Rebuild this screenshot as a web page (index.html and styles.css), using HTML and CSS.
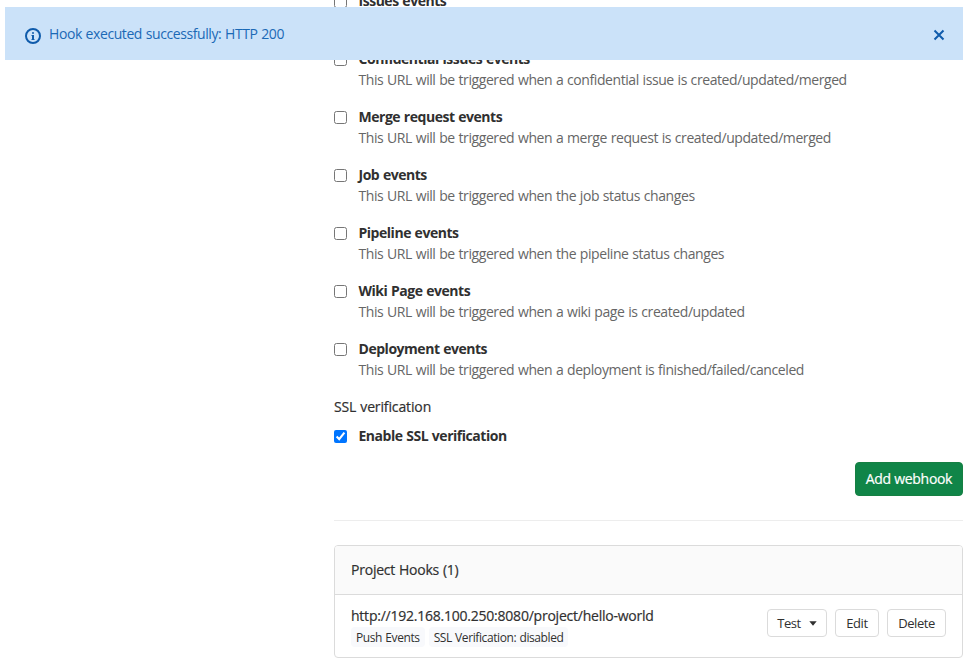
FILE: index.html
```html
<!DOCTYPE html>
<html lang="en">
<head>
<meta charset="utf-8">
<title>Webhooks</title>
<link rel="stylesheet" href="styles.css">
</head>
<body>
<div class="flash" role="status">
  <svg class="flash-icon" width="16" height="16" viewBox="0 0 16 16" aria-hidden="true"><circle cx="8" cy="8" r="7" fill="none" stroke="currentColor" stroke-width="2"/><rect x="7" y="4" width="2" height="2" rx="1" fill="currentColor"/><path d="M6.5 7H9v4h.5v1h-3v-1H7V8h-.5z" fill="currentColor"/></svg>
  <span class="flash-text">Hook executed successfully: HTTP 200</span>
  <svg class="flash-close" width="12" height="12" viewBox="0 0 12 12" aria-label="Close"><path d="M1.5 1.5l9 9M10.5 1.5l-9 9" fill="none" stroke="currentColor" stroke-width="2"/></svg>
</div>
<main class="content">
  <form class="hook-form">
    <label class="event"><input type="checkbox"><span><strong>Issues events</strong><span class="help">This URL will be triggered when an issue is created/updated/merged</span></span></label>
    <label class="event"><input type="checkbox"><span><strong>Confidential issues events</strong><span class="help">This URL will be triggered when a confidential issue is created/updated/merged</span></span></label>
    <label class="event"><input type="checkbox"><span><strong>Merge request events</strong><span class="help">This URL will be triggered when a merge request is created/updated/merged</span></span></label>
    <label class="event"><input type="checkbox"><span><strong>Job events</strong><span class="help">This URL will be triggered when the job status changes</span></span></label>
    <label class="event"><input type="checkbox"><span><strong>Pipeline events</strong><span class="help">This URL will be triggered when the pipeline status changes</span></span></label>
    <label class="event"><input type="checkbox"><span><strong>Wiki Page events</strong><span class="help">This URL will be triggered when a wiki page is created/updated</span></span></label>
    <label class="event"><input type="checkbox"><span><strong>Deployment events</strong><span class="help">This URL will be triggered when a deployment is finished/failed/canceled</span></span></label>
    <div class="section-label">SSL verification</div>
    <label class="event ssl"><input type="checkbox" checked><span><strong>Enable SSL verification</strong></span></label>
    <div class="actions"><button type="button" class="btn-success">Add webhook</button></div>
  </form>
  <hr>
  <section class="card">
    <header class="card-header">Project Hooks (1)</header>
    <div class="hook">
      <div class="hook-info">
        <div class="hook-url">http://192.168.100.250:8080/project/hello-world</div>
        <div class="tags"><span class="tag">Push Events</span><span class="tag">SSL Verification: disabled</span></div>
      </div>
      <div class="hook-actions">
        <button type="button" class="btn test">Test <svg class="caret" width="8" height="5" viewBox="0 0 8 5"><path d="M.3.3h7.4L4 4.7z" fill="currentColor"/></svg></button>
        <button type="button" class="btn edit">Edit</button>
        <button type="button" class="btn delete">Delete</button>
      </div>
    </div>
  </section>
</main>
</body>
</html>
```
FILE: styles.css
```css
* { box-sizing: border-box; }
body {
  margin: 0;
  height: 661px;
  overflow: hidden;
  background: #fff;
  color: #303030;
  font: 14px/21px "Open Sans", "Noto Sans", sans-serif;
  letter-spacing: -0.415px;
  word-spacing: 0.5px;
}
.flash {
  position: absolute;
  z-index: 1;
  top: 7px;
  left: 5px;
  width: 958px;
  height: 53px;
  padding: 0 18px 0 20px;
  display: flex;
  align-items: center;
  background: #cbe2f9;
  color: #1b69b6;
}
.flash-icon { margin: 5px 8px 0 0; color: #0f5bab; }
.flash-text { flex: 1; }
.flash-close { margin-top: 3px; color: #0f5bab; }
.content {
  width: 629px;
  margin-left: 334px;
  display: flow-root;
}
.hook-form { margin-top: -10px; }
.event {
  display: flex;
  height: 58px;
}
.event input {
  width: 13px;
  height: 13px;
  margin: 5px 11.5px 0 0;
}
.event strong {
  display: block;
  font-weight: 700;
  letter-spacing: -0.47px;
}
.help { display: block; color: #666; }
.section-label {
  font-weight: 500;
  letter-spacing: -0.13px;
  -webkit-text-stroke: 0.2px;
}
.ssl { height: 21px; margin-top: 8px; }
.ssl input { accent-color: #0075ff; }
.actions {
  display: flex;
  justify-content: flex-end;
  margin-top: 16px;
}
.btn-success {
  width: 108px;
  height: 34px;
  padding: 0;
  border: 1px solid #168043;
  border-radius: 4px;
  background: #108548;
  color: #fff;
  font: 500 14px/20px "Open Sans", sans-serif;
  letter-spacing: -0.3px;
  -webkit-text-stroke: 0.2px;
}
hr {
  margin: 24px 0;
  border: 0;
  border-top: 1px solid #ededed;
}
.card {
  height: 113px;
  border: 1px solid #dbdbdb;
  border-radius: 4px;
  overflow: hidden;
}
.card-header {
  height: 49px;
  padding: 13px 16px;
  border-bottom: 1px solid #dbdbdb;
  background: #fafafa;
  font-weight: 500;
  letter-spacing: -0.23px;
  -webkit-text-stroke: 0.2px;
}
.hook {
  display: flex;
  justify-content: space-between;
  padding: 10px 16px 0;
}
.hook-url {
  font-weight: 500;
  letter-spacing: -0.23px;
  -webkit-text-stroke: 0.2px;
}
.tags { display: flex; gap: 4px; padding-top: 1px; }
.tag {
  height: 20px;
  padding: 0 5px;
  border-radius: 4px;
  background: #f8f9fc;
  font-size: 12px;
  line-height: 22px;
  letter-spacing: -0.4px;
}
.hook-actions {
  display: flex;
  gap: 8px;
  padding-top: 4px;
}
.btn {
  height: 28px;
  padding: 0;
  border: 1px solid #dbdbdb;
  border-radius: 4px;
  background: #fff;
  color: #303030;
  font: 13px/18px "Open Sans", sans-serif;
  letter-spacing: -0.45px;
}
.test {
  width: 60px;
  display: flex;
  align-items: center;
  justify-content: center;
  gap: 8px;
}
.edit { width: 44px; }
.delete { width: 59px; }
```
